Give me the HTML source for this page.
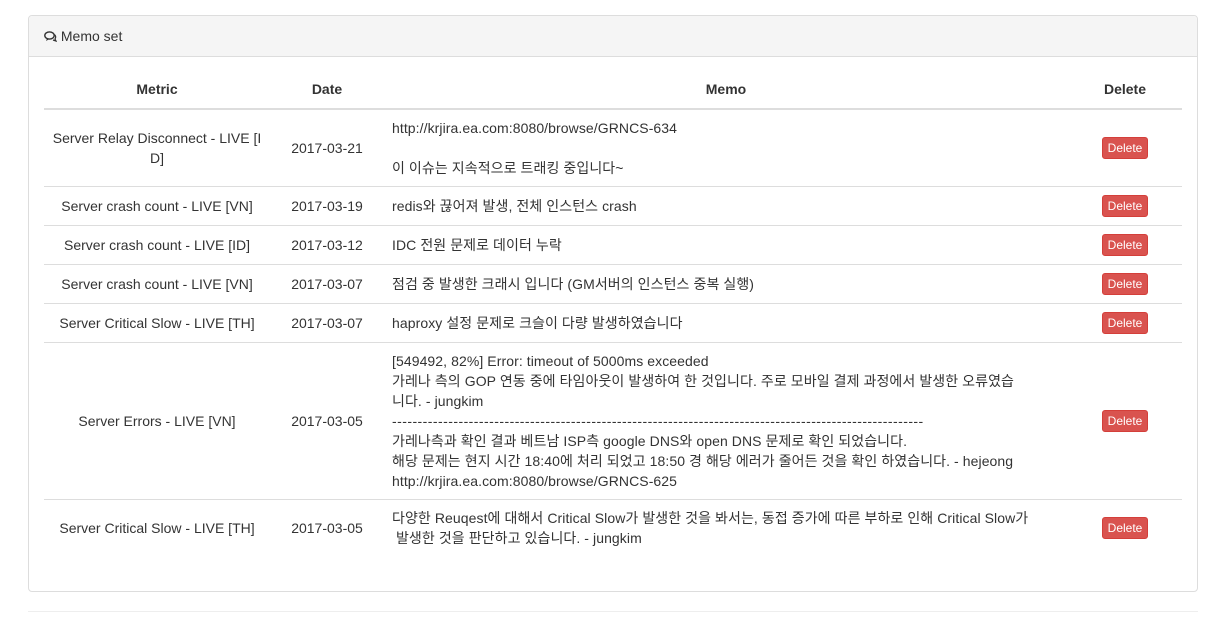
<!DOCTYPE html>
<html><head><meta charset="utf-8"><style>
*{box-sizing:border-box}
body{margin:0;background:#fff;font-family:"Liberation Sans","Noto Sans CJK KR",sans-serif;font-size:14px;color:#333;width:1226px;height:621px;overflow:hidden;position:relative}
.panel{position:absolute;left:28px;top:15px;width:1170px;height:577px;border:1px solid #ddd;border-radius:4px}
.ph{height:41px;background:#f5f5f5;border-bottom:1px solid #ddd;padding:10px 15px;font-size:14px;line-height:20px;border-radius:4px 4px 0 0}
table{position:absolute;left:15px;top:59px;width:1138px;border-collapse:collapse;table-layout:fixed}
th{font-weight:bold;text-align:center;padding:4px 8px 9px;line-height:20px;border-bottom:2px solid #ddd;font-size:14px}
td{padding:8px;line-height:20px;border-top:1px solid #ddd;vertical-align:middle;font-size:14px}
td.c{text-align:center}
td.m{white-space:nowrap;font-size:14px;letter-spacing:0.08px}
.d{letter-spacing:0.45px}
.btn{display:inline-block;background:#d9534f;border:1px solid #d43f3a;color:#fff;font-size:12px;line-height:18px;padding:1px 5px;border-radius:3px;letter-spacing:0}
.hr{position:absolute;left:28px;top:611px;width:1170px;border-top:1px solid #eee}
</style></head><body>
<div class="panel">
<div class="ph"><svg width="13" height="11" viewBox="0 0 13 11" style="vertical-align:-1px"><ellipse cx="5.5" cy="4.5" rx="4.7" ry="3.6" fill="none" stroke="#333" stroke-width="1.4"/><path d="M3 7.5 L2 10 L5.5 8" fill="#333"/><path d="M10.5 3.5 Q12.6 5.5 11 8 L12 10 L9 9" fill="none" stroke="#333" stroke-width="1.2"/></svg> Memo set</div>
<table>
<colgroup><col style="width:226px"><col style="width:114px"><col style="width:684px"><col style="width:114px"></colgroup>
<tr><th>Metric</th><th>Date</th><th>Memo</th><th>Delete</th></tr>
<tr style="height:77px"><td class="c">Server Relay Disconnect - LIVE [I<br>D]</td><td class="c">2017-03-21</td><td class="m">http://krjira.ea.com:8080/browse/GRNCS-634<br><br>이 이슈는 지속적으로 트래킹 중입니다~</td><td class="c"><span class="btn">Delete</span></td></tr>
<tr style="height:39px"><td class="c">Server crash count - LIVE [VN]</td><td class="c">2017-03-19</td><td class="m">redis와 끊어져 발생, 전체 인스턴스 crash</td><td class="c"><span class="btn">Delete</span></td></tr>
<tr style="height:39px"><td class="c">Server crash count - LIVE [ID]</td><td class="c">2017-03-12</td><td class="m">IDC 전원 문제로 데이터 누락</td><td class="c"><span class="btn">Delete</span></td></tr>
<tr style="height:39px"><td class="c">Server crash count - LIVE [VN]</td><td class="c">2017-03-07</td><td class="m">점검 중 발생한 크래시 입니다 (GM서버의 인스턴스 중복 실행)</td><td class="c"><span class="btn">Delete</span></td></tr>
<tr style="height:39px"><td class="c">Server Critical Slow - LIVE [TH]</td><td class="c">2017-03-07</td><td class="m">haproxy 설정 문제로 크슬이 다량 발생하였습니다</td><td class="c"><span class="btn">Delete</span></td></tr>
<tr style="height:157px"><td class="c">Server Errors - LIVE [VN]</td><td class="c">2017-03-05</td><td class="m">[549492, 82%] Error: timeout of 5000ms exceeded<br>가레나 측의 GOP 연동 중에 타임아웃이 발생하여 한 것입니다. 주로 모바일 결제 과정에서 발생한 오류였습<br>니다. - jungkim<br><span class="d">--------------------------------------------------------------------------------------------------------</span><br>가레나측과 확인 결과 베트남 ISP측 google DNS와 open DNS 문제로 확인 되었습니다.<br>해당 문제는 현지 시간 18:40에 처리 되었고 18:50 경 해당 에러가 줄어든 것을 확인 하였습니다. - hejeong<br>http://krjira.ea.com:8080/browse/GRNCS-625</td><td class="c"><span class="btn">Delete</span></td></tr>
<tr style="height:57px"><td class="c">Server Critical Slow - LIVE [TH]</td><td class="c">2017-03-05</td><td class="m">다양한 Reuqest에 대해서 Critical Slow가 발생한 것을 봐서는, 동접 증가에 따른 부하로 인해 Critical Slow가<br>&nbsp;발생한 것을 판단하고 있습니다. - jungkim</td><td class="c"><span class="btn">Delete</span></td></tr>
</table>
</div>
<div class="hr"></div>
</body></html>
